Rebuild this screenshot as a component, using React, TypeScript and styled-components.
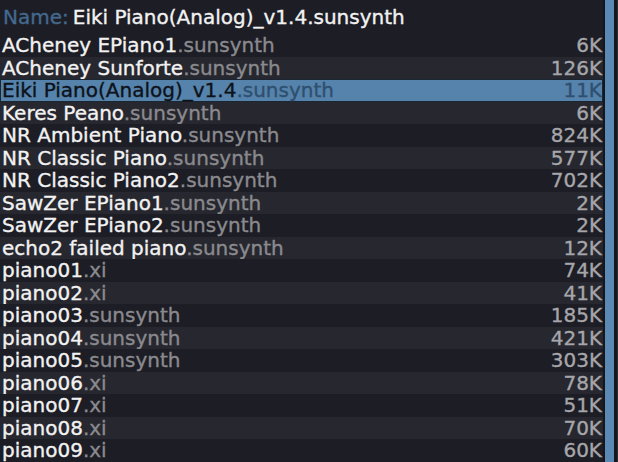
import styled, { createGlobalStyle } from 'styled-components'

const GlobalStyle = createGlobalStyle`
  html, body {
    margin: 0;
    padding: 0;
    background: #1d1d25;
  }
  * {
    box-sizing: border-box;
  }
`

interface FileEntry {
  readonly name: string
  readonly ext: string
  readonly size: string
}

const files: FileEntry[] = [
  { name: 'ACheney EPiano1', ext: '.sunsynth', size: '6K' },
  { name: 'ACheney Sunforte', ext: '.sunsynth', size: '126K' },
  { name: 'Eiki Piano(Analog)_v1.4', ext: '.sunsynth', size: '11K' },
  { name: 'Keres Peano', ext: '.sunsynth', size: '6K' },
  { name: 'NR Ambient Piano', ext: '.sunsynth', size: '824K' },
  { name: 'NR Classic Piano', ext: '.sunsynth', size: '577K' },
  { name: 'NR Classic Piano2', ext: '.sunsynth', size: '702K' },
  { name: 'SawZer EPiano1', ext: '.sunsynth', size: '2K' },
  { name: 'SawZer EPiano2', ext: '.sunsynth', size: '2K' },
  { name: 'echo2 failed piano', ext: '.sunsynth', size: '12K' },
  { name: 'piano01', ext: '.xi', size: '74K' },
  { name: 'piano02', ext: '.xi', size: '41K' },
  { name: 'piano03', ext: '.sunsynth', size: '185K' },
  { name: 'piano04', ext: '.sunsynth', size: '421K' },
  { name: 'piano05', ext: '.sunsynth', size: '303K' },
  { name: 'piano06', ext: '.xi', size: '78K' },
  { name: 'piano07', ext: '.xi', size: '51K' },
  { name: 'piano08', ext: '.xi', size: '70K' },
  { name: 'piano09', ext: '.xi', size: '60K' },
]

const SELECTED = 2

const Window = styled.div`
  display: flex;
  width: 618px;
  height: 462px;
  overflow: hidden;
  background: #1d1d25;
  font-family: 'DejaVu Sans', sans-serif;
  font-size: 20px;
  line-height: 22.5px;
  -webkit-text-stroke: 0.35px currentColor;
`

const Browser = styled.div`
  flex: 1;
  display: flex;
  flex-direction: column;
  min-width: 0;
`

const NameBar = styled.div`
  display: flex;
  height: 34px;
  padding: 5.5px 0 0 3px;
  white-space: nowrap;
`

const NameLabel = styled.span`
  color: #43698f;
  margin-right: 4px;
`

const NameValue = styled.span`
  color: #f2f2f2;
`

const List = styled.div`
  display: flex;
  flex-direction: column;
`

interface RowProps {
  readonly $odd: boolean
  readonly $selected: boolean
}

const Row = styled.div<RowProps>`
  display: flex;
  justify-content: space-between;
  height: 22.5px;
  padding: 0 1px 0 2px;
  white-space: nowrap;
  background: ${(p) => (p.$selected ? '#5683ab' : p.$odd ? '#27272f' : '#1d1d25')};
  box-shadow: ${(p) => (p.$selected ? 'inset 0 0 0 1px #1a2733' : 'none')};
`

const FileName = styled.span<{ readonly $selected: boolean }>`
  color: ${(p) => (p.$selected ? '#0d121a' : '#f2f2f2')};
`

const Ext = styled.span<{ readonly $selected: boolean }>`
  color: ${(p) => (p.$selected ? '#2f4f6f' : '#8a8a8e')};
`

const Size = styled.span<{ readonly $selected: boolean }>`
  color: ${(p) => (p.$selected ? '#2f4f6f' : '#a6a6aa')};
`

const ScrollTrack = styled.div`
  width: 15px;
  padding: 0 3px 0 2px;
  background: #16161c;
  border-right: 1px solid #2c2c34;
`

const ScrollThumb = styled.div`
  height: 100%;
  background: #5a89b5;
`

function App(): JSX.Element {
  return (
    <Window>
      <GlobalStyle />
      <Browser>
        <NameBar>
          <NameLabel>Name:</NameLabel>
          <NameValue>Eiki Piano(Analog)_v1.4.sunsynth</NameValue>
        </NameBar>
        <List>
          {files.map((f, i) => {
            const sel = i === SELECTED
            return (
              <Row key={f.name} $odd={i % 2 === 1} $selected={sel}>
                <span>
                  <FileName $selected={sel}>{f.name}</FileName>
                  <Ext $selected={sel}>{f.ext}</Ext>
                </span>
                <Size $selected={sel}>{f.size}</Size>
              </Row>
            )
          })}
        </List>
      </Browser>
      <ScrollTrack>
        <ScrollThumb />
      </ScrollTrack>
    </Window>
  )
}

export default App
